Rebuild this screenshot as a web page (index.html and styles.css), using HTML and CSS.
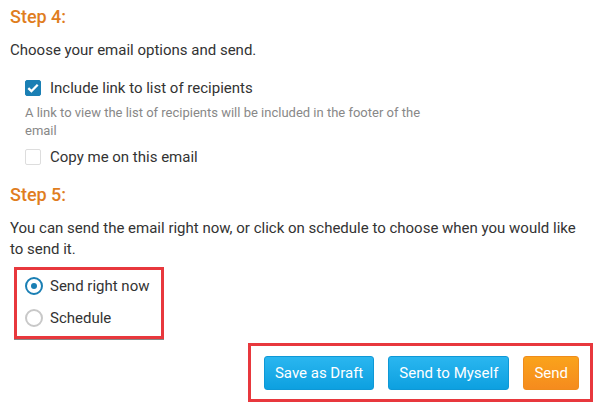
FILE: index.html
```html
<!DOCTYPE html>
<html>
<head>
<meta charset="utf-8">
<link rel="stylesheet" href="styles.css">
</head>
<body>
<div class="page">
  <h2 class="step">Step 4:</h2>
  <p class="intro">Choose your email options and send.</p>
  <div class="options">
    <label class="check-row">
      <span class="checkbox checked">
        <svg width="12" height="10" viewBox="0 0 12 10"><path d="M1.3 5.2 L4.4 8.2 L10.7 1.8" fill="none" stroke="#fff" stroke-width="2.3"/></svg>
      </span>
      <span>Include link to list of recipients</span>
    </label>
    <p class="help">A link to view the list of recipients will be included in the footer of the email</p>
    <label class="check-row">
      <span class="checkbox"></span>
      <span>Copy me on this email</span>
    </label>
  </div>

  <h2 class="step step5">Step 5:</h2>
  <p class="intro2">You can send the email right now, or click on schedule to choose when you would like to send it.</p>
  <div class="highlight radios">
    <label class="radio-row"><span class="radio on"></span><span>Send right now</span></label>
    <label class="radio-row"><span class="radio"></span><span>Schedule</span></label>
  </div>
  <div class="actions-wrap">
    <div class="highlight actions">
      <button class="btn blue">Save as Draft</button>
      <button class="btn blue">Send to Myself</button>
      <button class="btn orange">Send</button>
    </div>
  </div>
</div>
</body>
</html>
```
FILE: styles.css
```css
* { box-sizing: border-box; }
html, body { margin: 0; padding: 0; background: #fff; }
body { font-family: Roboto, "Open Sans", Arial, sans-serif; color: #333; font-size: 15px; }
.page { padding: 6px 10px 0 10px; }
.step { margin: 0; font-size: 18px; line-height: 22px; font-weight: 500; color: #e07d1e; }
.intro { margin: 12px 0 0; line-height: 21px; }
.options { padding-left: 15px; margin-top: 17px; }
.check-row { display: flex; align-items: center; gap: 9px; height: 20px; }
.checkbox { width: 16px; height: 16px; border: 1px solid #ddd; border-radius: 2px; background: #fff; display: flex; align-items: center; justify-content: center; }
.checkbox.checked { background: #1a7fb4; border-color: #1a7fb4; }
.help { margin: 6px 0 7px; font-size: 13px; line-height: 18px; color: #888; max-width: 402px; }
.step5 { margin-top: 17px; }
.intro2 { margin: 12px 0 0; line-height: 21px; }
.highlight { border: 3px solid #e8383d; box-shadow: 0 1px 0 #888; }
.radios { display: inline-flex; flex-direction: column; margin-top: 7px; margin-left: 4px; padding: 6px 12px 8px 8px; gap: 12px; }
.radio-row { display: flex; align-items: center; gap: 7px; height: 20px; }
.radio { width: 18px; height: 18px; border-radius: 50%; border: 2px solid #c8c8c8; display: flex; align-items: center; justify-content: center; }
.radio.on { border-color: #1a7fb4; }
.radio.on::after { content: ""; width: 6px; height: 6px; border-radius: 50%; background: #1a7fb4; }
.actions-wrap { display: flex; justify-content: flex-end; margin-top: 4px; margin-right: -5px; }
.actions { display: flex; gap: 14px; padding: 10px 11px 9px 13px; }
.btn { font-family: Roboto, Arial, sans-serif; font-size: 15px; color: #fff; height: 34px; padding: 0 10px; border-radius: 3px; cursor: pointer; }
.btn.blue { background: linear-gradient(#2ab6f0, #0da0e0); border: 1px solid #0e98d6; }
.btn.orange { background: linear-gradient(#faa31b, #f58b1e); border: 1px solid #ef8c1c; }
```
